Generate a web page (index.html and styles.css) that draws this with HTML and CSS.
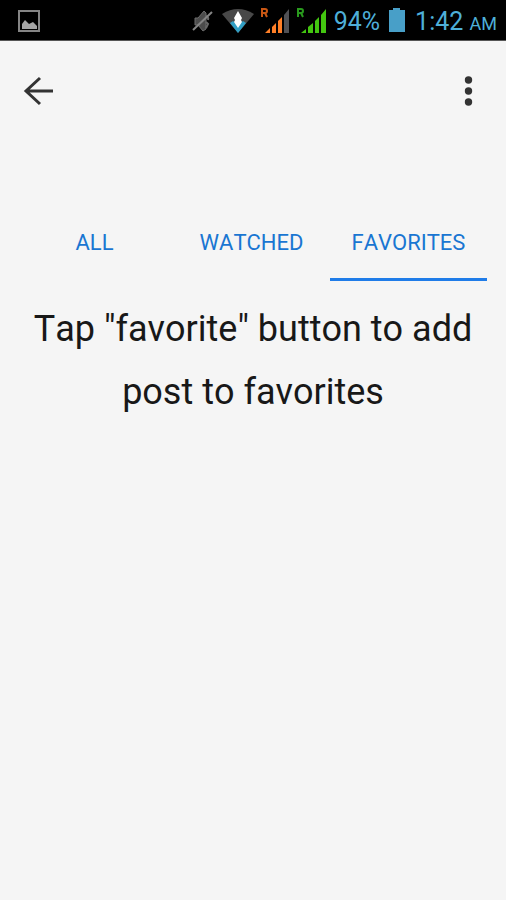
FILE: index.html
```html
<!DOCTYPE html>
<html lang="en">
<head>
  <meta charset="UTF-8">
  <meta name="viewport" content="width=device-width, initial-scale=1">
  <title>Favorites</title>
  <link rel="stylesheet" href="styles.css">
</head>
<body>

  <!-- Status bar -->
  <div class="status-bar">
    <svg class="status-picture" width="24" height="24" viewBox="0 0 24 24" aria-hidden="true">
      <rect x="2" y="2" width="20" height="20" fill="none" stroke="#858585" stroke-width="2"/>
      <path d="M5 20v-5l3-4 4 4 4-2 4 4v3z" fill="#a5a5a5"/>
    </svg>

    <div class="status-icons">
      <svg width="22" height="24" viewBox="0 0 22 24" aria-hidden="true">
        <path d="M3 9h3l6-7 2 2v16l-3 2-5-6H3z" fill="#4c4c4c" stroke="#6c6c6c" stroke-width="1"/>
        <path d="M14 7q3 1 2 4M14 13l2 2-2 4" fill="none" stroke="#686868" stroke-width="2"/>
        <path d="M1 21L20 3" stroke="#858585" stroke-width="2"/>
      </svg>
      <svg width="34" height="26" viewBox="0 0 34 26" aria-hidden="true">
        <path d="M2 6Q18-4 34 6L18 25z" fill="#484848"/>
        <path d="M10 15l3-2 5 4 5-4 3 2-8 10z" fill="#319fc4"/>
        <path d="M18 3l4 7-1 2 1 2-4 6-4-6 1-2-1-2z" fill="#fff"/>
      </svg>
      <svg width="30" height="28" viewBox="0 0 30 28" aria-hidden="true">
        <path d="M2 10V2h3q2 0 2 2t-2 2H2M5 6l2 4" fill="none" stroke="#c95714" stroke-width="2"/>
        <path d="M5 26l5-5v5zM12 20l4-4v10h-4zM18 14l4-4v16h-4z" fill="#ff7f27"/>
        <path d="M24 8l5-6v24h-5z" fill="#505054"/>
      </svg>
      <svg width="32" height="28" viewBox="0 0 32 28" aria-hidden="true">
        <path d="M2 10V2h3q2 0 2 2t-2 2H2M5 6l2 4" fill="none" stroke="#299a1d" stroke-width="2"/>
        <path d="M5 26l5-4v4zM12 20l5-4v10h-5zM19 14l4-4v16h-4zM25 8l5-6v24h-5z" fill="#43c610"/>
      </svg>
      <span class="battery-level">94%</span>
      <svg class="battery" width="18" height="26" viewBox="0 0 18 26" aria-hidden="true">
        <path d="M1 2h4V0h7v2h5v22H1z" fill="#489fc8"/>
      </svg>
      <span class="clock">1:42 <small>AM</small></span>
    </div>
  </div>

  <!-- Toolbar -->
  <header class="toolbar">
    <button class="icon-btn" type="button" aria-label="Back">
      <svg width="32" height="32" viewBox="0 0 32 32">
        <path d="M31 16H4M18 3L4 16l14 13" fill="none" stroke="#333" stroke-width="3"/>
      </svg>
    </button>
    <button class="icon-btn" type="button" aria-label="More options">
      <svg width="32" height="32" viewBox="0 0 32 32">
        <g fill="#333">
          <circle cx="16.5" cy="5" r="3.7"/>
          <circle cx="16.5" cy="16" r="3.7"/>
          <circle cx="16.5" cy="27" r="3.7"/>
        </g>
      </svg>
    </button>
  </header>

  <!-- Post filters -->
  <nav class="tabs">
    <a class="tab" href="#all">ALL</a>
    <a class="tab" href="#watched">WATCHED</a>
    <a class="tab active" href="#favorites" aria-current="page">FAVORITES</a>
  </nav>

  <main class="empty-state">
    <p>Tap "favorite" button to add post to favorites</p>
  </main>

</body>
</html>
```

FILE: styles.css
```css
* {
  box-sizing: border-box;
}

body {
  margin: 0;
  min-height: 100vh;
  background-color: #f5f5f5;
  color: #181818;
  font-family: Roboto, "Liberation Sans", sans-serif;
  font-kerning: none;
}

.status-bar {
  display: flex;
  align-items: center;
  justify-content: space-between;
  height: 41px;
  padding: 2px 9px 0 17px;
  background-color: #000;
  border-bottom: 1px solid #555;
  color: #4eafd8;
}

.status-icons {
  display: flex;
  align-items: center;
  gap: 6px;
  font-size: 25px;
  white-space: nowrap;
}

.status-icons svg {
  flex: none;
}

.battery {
  margin: 0 3px 0 2px;
}

.clock small {
  font-size: 18px;
}

.toolbar {
  display: flex;
  align-items: center;
  justify-content: space-between;
  height: 100px;
  padding: 0 14px;
}

.icon-btn {
  display: flex;
  align-items: center;
  justify-content: center;
  width: 48px;
  height: 48px;
  padding: 0;
  border: none;
  background: none;
  cursor: pointer;
}

.tabs {
  display: flex;
  margin-top: 64px;
  padding: 0 19px 0 16px;
}

.tab {
  flex: 1;
  height: 76px;
  border-bottom: 3px solid transparent;
  color: #1976d2;
  font-size: 22px;
  line-height: 76px;
  text-align: center;
  text-decoration: none;
}

.tab.active {
  border-bottom-color: #1f7ce8;
}

.empty-state {
  padding: 17px 24px;
  font-size: 36px;
  line-height: 63px;
  text-align: center;
}

.empty-state p {
  margin: 0;
}
```
